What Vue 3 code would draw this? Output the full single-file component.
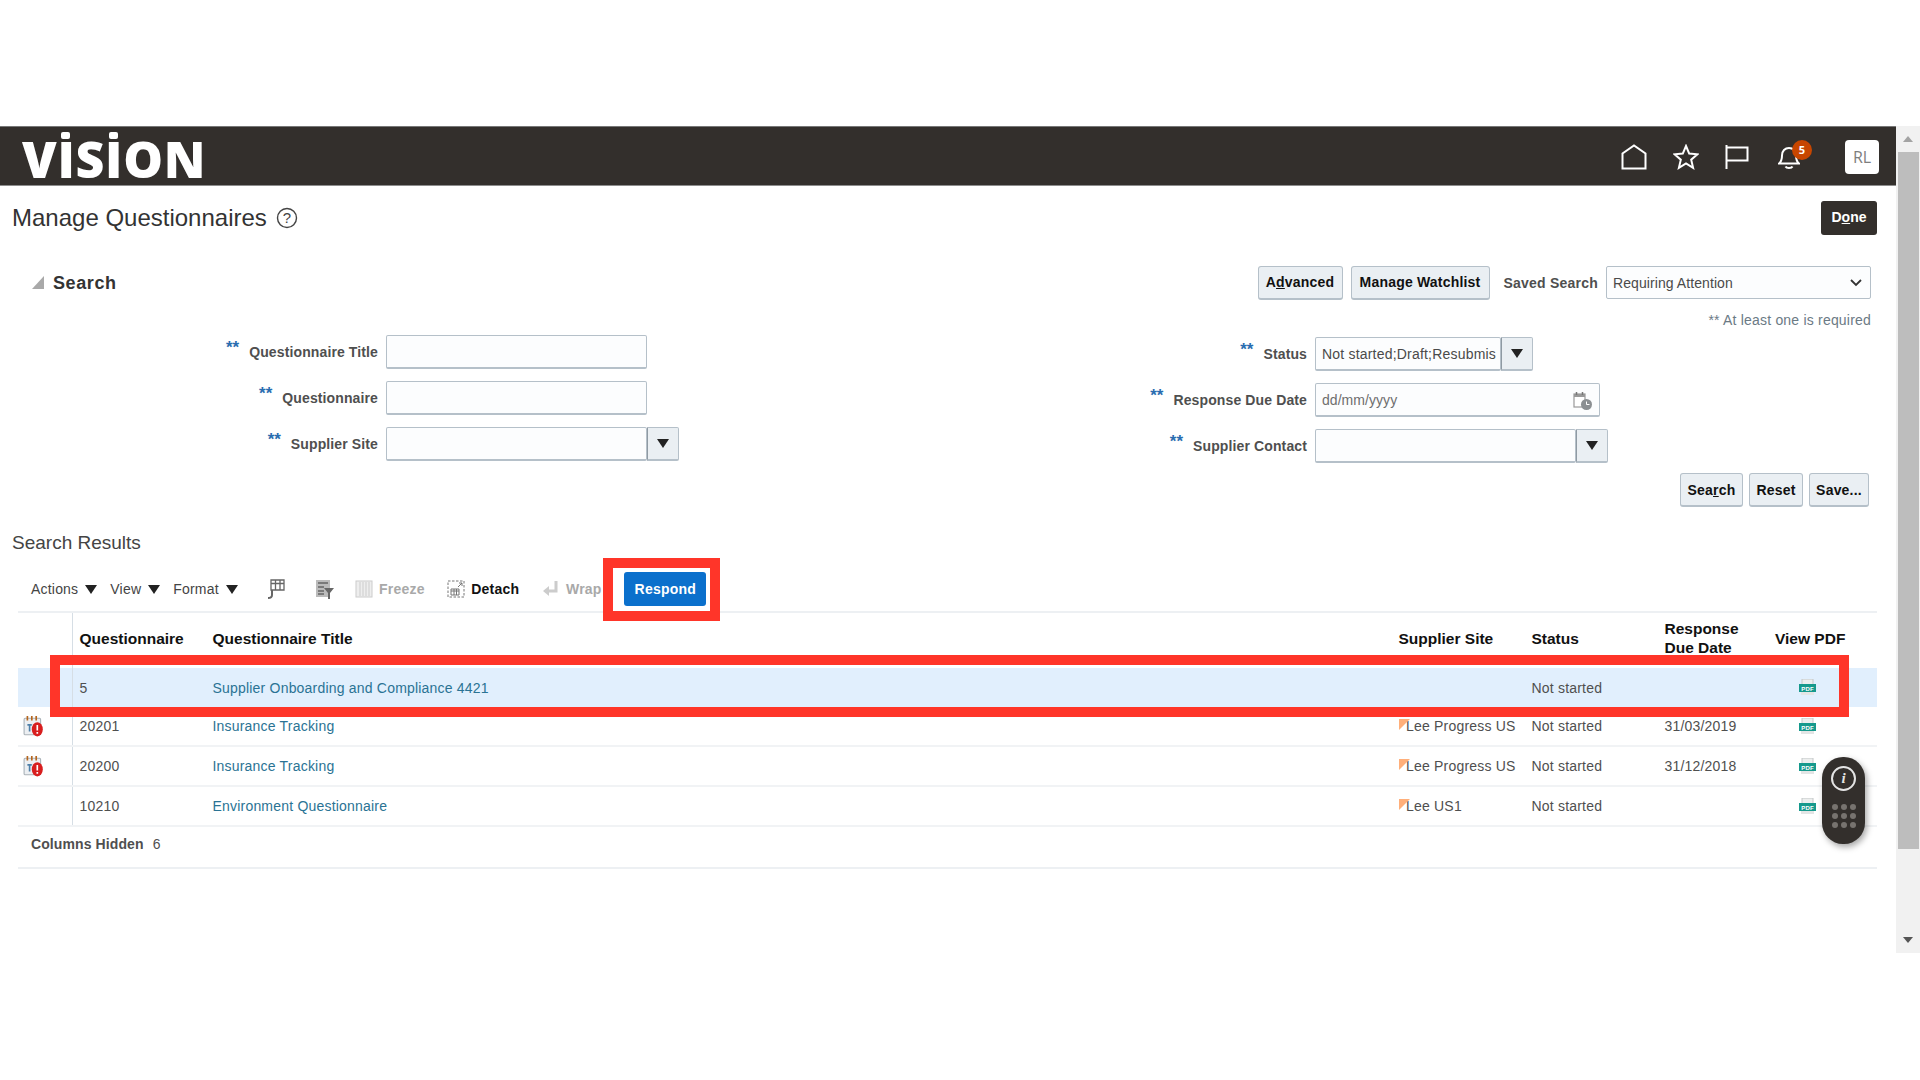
<script setup>
const leftFields = [
  { label: 'Questionnaire Title', dd: false },
  { label: 'Questionnaire', dd: false },
  { label: 'Supplier Site', dd: true }
]
const rows = [
  { id: '5', title: 'Supplier Onboarding and Compliance 4421', site: '', status: 'Not started', due: '', sel: true, alert: false },
  { id: '20201', title: 'Insurance Tracking', site: 'Lee Progress US', status: 'Not started', due: '31/03/2019', sel: false, alert: true },
  { id: '20200', title: 'Insurance Tracking', site: 'Lee Progress US', status: 'Not started', due: '31/12/2018', sel: false, alert: true },
  { id: '10210', title: 'Environment Questionnaire', site: 'Lee US1', status: 'Not started', due: '', sel: false, alert: false }
]
</script>

<template>
  <div class="frame">
    <div class="page">
      <main class="content">
        <header class="brand">
          <div class="logo">V<span class="dot">I</span>S<span class="dot">I</span>ON</div>
          <nav class="nav">
            <svg class="ni home" viewBox="0 0 26 26"><path d="M1.500 24.500V9.500L13 1.500l11.500 8v15z" fill="none" stroke="#fff" stroke-width="2"/></svg>
            <svg class="ni star" viewBox="0 0 26 26"><path d="M13 2l3.200 7.600 8.300.7-6.300 5.400 1.900 8.100L13 19.500l-7.100 4.300 1.900-8.100-6.300-5.400 8.300-.7z" fill="none" stroke="#fff" stroke-width="2" stroke-linejoin="miter"/></svg>
            <svg class="ni flag" viewBox="0 0 24 24"><path d="M1.500 0v24M1.500 2.500h21v13h-21" fill="none" stroke="#fff" stroke-width="2"/></svg>
            <div class="bellwrap">
              <svg class="ni bell" viewBox="0 0 22 24"><path d="M1 18.500c2.500-2 3-3.500 3-8 0-4.500 3-7.500 7-7.500s7 3 7 7.500c0 4.500.5 6 3 8zM7.500 21.500c1 2 6 2 7 0" fill="none" stroke="#fff" stroke-width="2"/></svg>
              <span class="badge">5</span>
            </div>
            <div class="avatar">RL</div>
          </nav>
        </header>

        <div class="titlerow">
          <h1 class="title">Manage Questionnaires</h1>
          <svg class="help" viewBox="0 0 22 22"><circle cx="11" cy="11" r="9.500" fill="none" stroke="#444" stroke-width="1.400"/><text x="11" y="16" text-anchor="middle" class="helpq">?</text></svg>
          <button class="btn dark">D<u>o</u>ne</button>
        </div>

        <div class="searchhead">
          <span class="tri"></span>
          <h2 class="searchtitle">Search</h2>
          <button class="btn adv">A<u>d</u>vanced</button>
          <button class="btn watch">Manage Watchlist</button>
          <span class="lab saved">Saved Search</span>
          <div class="select">
            <span>Requiring Attention</span>
            <svg width="12" height="8" viewBox="0 0 12 8"><path d="M1 1l5 5 5-5" fill="none" stroke="#333" stroke-width="1.800"/></svg>
          </div>
        </div>
        <div class="note">** At least one is required</div>

        <div class="forms">
          <div class="fgrid lgrid">
            <template v-for="f in leftFields" :key="f.label">
              <div class="lab"><span class="req">**</span>{{ f.label }}</div>
              <div class="field w-l">
                <div class="inp"></div>
                <div v-if="f.dd" class="dd"><i></i></div>
              </div>
            </template>
          </div>
          <div class="fgrid rgrid">
            <div class="lab"><span class="req">**</span>Status</div>
            <div class="field">
              <div class="inp w-s">Not started;Draft;Resubmis</div>
              <div class="dd"><i></i></div>
            </div>
            <div class="lab"><span class="req">**</span>Response Due Date</div>
            <div class="field">
              <div class="inp w-d ph">
                <span>dd/mm/yyyy</span>
                <svg width="20" height="20" viewBox="0 0 20 20">
                  <rect x="1" y="3" width="11" height="13" fill="#fff" stroke="#999" stroke-width="1.200"/>
                  <path d="M1 3h11v3H1z" fill="#999"/><path d="M3.500 1v3M9.500 1v3" stroke="#777" stroke-width="1.500"/>
                  <circle cx="13.500" cy="13.500" r="5.500" fill="#8b8f92"/><path d="M13.500 10.500v3h3" fill="none" stroke="#fff"/>
                </svg>
              </div>
            </div>
            <div class="lab"><span class="req">**</span>Supplier Contact</div>
            <div class="field">
              <div class="inp w-c"></div>
              <div class="dd"><i></i></div>
            </div>
          </div>
        </div>

        <div class="actions">
          <button class="btn b-search">Sea<u>r</u>ch</button>
          <button class="btn b-reset">Reset</button>
          <button class="btn b-save">Save...</button>
        </div>

        <h3 class="results">Search Results</h3>

        <div class="toolbar">
          <span class="menu m1">Actions<i></i></span>
          <span class="menu m2">View<i></i></span>
          <span class="menu m3">Format<i></i></span>
          <svg class="ti t1" viewBox="0 0 20 20"><path d="M6 1h13v10H6zM6 4.500h13M10.500 1v10M15 1v10" fill="none" stroke="#666" stroke-width="1.300"/><path d="M7 11v5c0 2-1 3-4 3" fill="none" stroke="#666" stroke-width="2"/></svg>
          <svg class="ti t2" viewBox="0 0 20 20"><path d="M1 1h14v17H1z" fill="#bbb"/><path d="M3 4h10M3 8h6M3 12h6M3 15h6" stroke="#666" stroke-width="1.500"/><path d="M9 9h10l-4 5v6h-2v-6z" fill="#666"/></svg>
          <svg class="ti t3" viewBox="0 0 18 18"><rect x="1" y="1" width="16" height="16" fill="#eee" stroke="#ccc"/><path d="M5 2v14M8 2v14M11 2v14M14 2v14" stroke="#ccc"/></svg>
          <span class="tbtn off tf">Freeze</span>
          <svg class="ti t4" viewBox="0 0 18 18"><path d="M1 1h16v16H1z" fill="none" stroke="#777" stroke-dasharray="2.500 1.500"/><path d="M4 9h8v6H4zM4 11h8M7 9v6M9.500 9v6" fill="none" stroke="#777"/><path d="M11 7l4-4M12 3h3v3" fill="none" stroke="#777"/></svg>
          <span class="tbtn on td">Detach</span>
          <svg class="ti t5" viewBox="0 0 18 18"><path d="M14 1v10H6" fill="none" stroke="#ccc" stroke-width="3"/><path d="M7 6v10L1 11z" fill="#ccc"/></svg>
          <span class="tbtn off tw">Wrap</span>
          <button class="respond">Respond</button>
        </div>

        <section class="table">
          <div class="row head">
            <div class="c c0"></div>
            <div class="c">Questionnaire</div>
            <div class="c">Questionnaire Title</div>
            <div class="c">Supplier Site</div>
            <div class="c">Status</div>
            <div class="c resp">Response Due Date</div>
            <div class="c vp">View PDF</div>
          </div>
          <div v-for="r in rows" :key="r.id" class="row body" :class="{ sel: r.sel }">
            <div class="c c0">
              <svg v-if="r.alert" class="cal" viewBox="0 0 20 20">
                <rect x="1" y="3" width="15" height="15" rx="1" fill="#eceff2" stroke="#aab2b8"/>
                <path d="M4 1v4M8 1v4M12 1v4" stroke="#b5651d" stroke-width="1.500"/>
                <path d="M4 9h4M6 9v6" stroke="#4d7fa8" stroke-width="1.500"/>
                <ellipse cx="13" cy="13" rx="5" ry="6.500" fill="#d81e1e"/>
                <path d="M13 9v5M13 15.500v1.500" stroke="#fff" stroke-width="1.500"/>
              </svg>
            </div>
            <div class="c">{{ r.id }}</div>
            <div class="c link">{{ r.title }}</div>
            <div class="c site"><span v-if="r.site" class="mark"></span>{{ r.site }}</div>
            <div class="c">{{ r.status }}</div>
            <div class="c">{{ r.due }}</div>
            <div class="c pdfc">
              <svg class="pdf" viewBox="0 0 17 17">
                <path d="M3 0h11v6H3z" fill="#eceeee" stroke="#c4c8c8"/>
                <rect x="0" y="5" width="17" height="8" fill="#16998c"/>
                <text x="8.500" y="11.600" text-anchor="middle" class="pdft">PDF</text>
                <path d="M2 13h13v3H2z" fill="#e3e5e5"/>
              </svg>
            </div>
          </div>
          <div class="foot"><span>Columns Hidden</span><b>6</b></div>
        </section>

        <div class="redbox rb1"></div>
        <div class="redbox rb2"></div>

        <div class="widget">
          <div class="info"><em>i</em></div>
          <div class="dots"><span v-for="n in 9" :key="n"></span></div>
        </div>
      </main>

      <aside class="scroll">
        <span class="up"></span>
        <div class="thumb"></div>
        <span class="down"></span>
      </aside>
    </div>
  </div>
</template>

<style>
html, body { margin: 0; background: #fff; }
</style>

<style scoped>
.frame {
  width: 1920px;
  height: 1080px;
  background: #fff;
  padding-top: 126px;
  box-sizing: border-box;
  font-family: "Liberation Sans", Arial, sans-serif;
  color: #4a4a4a;
  font-size: 14px;
  overflow: hidden;
}
.page { display: flex; height: 827px; }
.content { width: 1896px; position: relative; }

.brand {
  height: 60px;
  box-sizing: border-box;
  background: #332f2c;
  border-bottom: 1px solid #8d8d8d;
  border-top: 1px solid #777;
  display: flex;
  align-items: center;
  justify-content: space-between;
  padding: 0 17px 0 22px;
}
.logo {
  font-family: "Open Sans", sans-serif;
  font-weight: 800;
  font-size: 50px;
  line-height: 60px;
  color: #fff;
  letter-spacing: .7px;
  padding-top: 6px;
}
.dot { position: relative; display: inline-block; }
.dot::before {
  content: "";
  position: absolute;
  left: 50%;
  top: 3px;
  width: 9px;
  height: 7px;
  margin-left: -5px;
  background: #fff;
  border-radius: 2px;
}
.nav { display: flex; align-items: center; padding-top: 1px; }
.ni { display: block; }
.home { width: 26px; height: 26px; }
.star { width: 26px; height: 26px; margin-left: 26px; }
.flag { width: 24px; height: 24px; margin-left: 26px; }
.bellwrap { position: relative; margin-left: 29px; }
.bell { width: 22px; height: 24px; }
.badge {
  position: absolute;
  left: 14px;
  top: -5px;
  width: 20px;
  height: 20px;
  border-radius: 50%;
  background: #c74600;
  color: #fff;
  font: 700 11px/20px "Open Sans", sans-serif;
  text-align: center;
}
.avatar {
  margin-left: 45px;
  width: 34px;
  height: 34px;
  background: #fff;
  border-radius: 4px;
  color: #7e7e7e;
  font: 400 16px/34px "Open Sans", sans-serif;
  text-align: center;
}

.titlerow {
  display: flex;
  align-items: center;
  height: 33px;
  padding: 15px 19px 0 12px;
}
.title { margin: 0; font-weight: 400; font-size: 24px; color: #333; }
.help { width: 22px; height: 22px; margin-left: 9px; }
.helpq { font: 400 15px "Liberation Sans", sans-serif; fill: #444; }

.btn {
  font: 700 14px "Liberation Sans", sans-serif;
  color: #111;
  background: #eaeff3;
  border: 1px solid #b5c0c9;
  border-bottom-width: 2px;
  border-radius: 3px;
  padding: 0;
  height: 34px;
  box-sizing: border-box;
  letter-spacing: .2px;
}
.btn.dark {
  margin-left: auto;
  width: 56px;
  background: #332f2c;
  border-color: #332f2c;
  color: #fff;
  letter-spacing: 0;
}
.searchhead {
  display: flex;
  align-items: center;
  height: 33px;
  margin-top: 32px;
  padding: 0 25px 0 32px;
}
.tri {
  width: 0; height: 0;
  border-style: solid;
  border-width: 0 0 13px 12px;
  border-color: transparent transparent #a9a9a9 transparent;
}
.searchtitle { margin: 1px 0 0 9px; font-size: 18px; font-weight: 700; color: #333; letter-spacing: .6px; }
.adv { margin-left: auto; width: 85px; }
.watch { margin-left: 8px; width: 139px; }
.lab { font-weight: 700; color: #4f4f4f; font-size: 14px; letter-spacing: .12px; text-align: right; white-space: nowrap; margin-bottom: 1px; }
.saved { margin-left: 14px; margin-bottom: 0; letter-spacing: .22px; }
.select {
  margin-left: 8px;
  width: 265px;
  height: 33px;
  box-sizing: border-box;
  border: 1px solid #b5c0c9;
  border-radius: 2px;
  background: #fcfdfe;
  display: flex;
  align-items: center;
  justify-content: space-between;
  padding: 0 8px 0 6px;
  letter-spacing: .08px;
}
.note {
  margin-top: 13px;
  height: 16px;
  line-height: 16px;
  padding-right: 25px;
  text-align: right;
  color: #6b7a85;
  font-size: 14px;
  letter-spacing: .2px;
}
.forms {
  display: grid;
  grid-template-columns: 900px 1fr;
  margin-top: 7px;
}
.fgrid { display: grid; column-gap: 8px; row-gap: 12px; align-items: center; }
.lgrid { grid-template-columns: 378px auto; justify-content: start; grid-auto-rows: 34px; }
.rgrid { grid-template-columns: 407px auto; justify-content: start; grid-auto-rows: 34px; padding-top: 2px; }
.req { color: #2a6db0; font-size: 17px; font-weight: 700; margin-right: 10px; position: relative; top: -4px; letter-spacing: 0; }
.field { display: flex; height: 34px; }
.inp {
  box-sizing: border-box;
  height: 34px;
  width: 261px;
  background: #fcfdfe;
  border: 1px solid #b5c0c9;
  border-bottom-width: 2px;
  border-radius: 2px;
  padding: 0 6px;
  line-height: 33px;
  color: #4a4a4a;
  white-space: nowrap;
  overflow: hidden;
  letter-spacing: .2px;
}
.w-s { width: 186px; }
.w-d { width: 285px; display: flex; justify-content: space-between; align-items: center; color: #6e6e6e; letter-spacing: .05px; padding-top: 2px; }
.w-c { width: 261px; }
.dd {
  width: 32px;
  height: 34px;
  box-sizing: border-box;
  background: #eaeff3;
  border: 1px solid #b5c0c9;
  border-left-color: #8f9aa3;
  border-left-width: 1px;
  border-bottom-width: 2px;
  border-radius: 0 2px 2px 0;
  display: flex;
  align-items: center;
  justify-content: center;
}
.dd i, .menu i {
  display: block;
  width: 0; height: 0;
  border-style: solid;
  border-width: 9px 6px 0;
  border-color: #222 transparent transparent;
}
.actions {
  display: flex;
  justify-content: flex-end;
  gap: 6px;
  margin-top: 10px;
  padding-right: 27px;
}
.b-search { width: 63px; }
.b-reset { width: 54px; }
.b-save { width: 60px; }
.results {
  margin: 24px 0 0 12px;
  height: 24px;
  line-height: 24px;
  font-size: 19px;
  font-weight: 400;
  color: #444;
}
.toolbar {
  display: flex;
  align-items: center;
  height: 44px;
  margin: 12px 19px 0 18px;
  padding-left: 13px;
  box-sizing: border-box;
}
.menu { display: flex; align-items: center; color: #444; font-size: 14px; letter-spacing: .2px; }
.menu i { margin-left: 7px; }
.m2 { margin-left: 13px; }
.m3 { margin-left: 13px; }
.ti { width: 20px; height: 20px; flex: none; }
.t1 { margin-left: 27.300px; }
.t2 { margin-left: 30px; }
.t3 { margin-left: 20px; width: 18px; height: 18px; }
.t4 { margin-left: 22.200px; width: 18px; height: 18px; }
.t5 { margin-left: 22.300px; width: 18px; height: 18px; }
.tbtn { font-weight: 700; letter-spacing: .2px; }
.tf { margin-left: 6px; }
.td { margin-left: 6.500px; }
.tw { margin-left: 6.500px; }
.off { color: #a9a9a9; }
.on { color: #111; }
.respond {
  margin-left: 22.700px;
  width: 82px;
  height: 34px;
  background: #0b70cc;
  border: 0;
  border-radius: 3px;
  color: #fff;
  font: 700 14px "Liberation Sans", sans-serif;
  letter-spacing: .2px;
}
.table { margin: 0 19px 0 18px; border-top: 2px solid #edf0f3; }
.row {
  display: grid;
  grid-template-columns: 55px 133px 1186px 133px 133px 86px 133px;
  border-bottom: 2px solid #f1f3f5;
}
.c {
  padding-left: 6.500px;
  display: flex;
  align-items: center;
  white-space: nowrap;
  font-size: 14px;
  letter-spacing: .2px;
  color: #4f4f4f;
}
.c0 { border-right: 1px solid #d6dee5; padding-left: 0; box-sizing: border-box; }
.head { height: 55px; border-bottom: 0; }
.head .c { font-weight: 700; font-size: 15.500px; color: #111; letter-spacing: 0; padding-bottom: 4px; box-sizing: border-box; }
.head .c0 { padding-left: 0; padding-bottom: 0; }
.head .vp { padding-left: 31px; }
.head .resp { white-space: normal; line-height: 18.500px; width: 100px; padding-right: 0; padding-bottom: 4px; }
.body { height: 38px; }
.body .c { height: 38px; }
.sel { background: #e1effd; border-bottom: 0; height: 39px; }
.sel .c { height: 39px; }
.link { color: #2a7394; }
.site { position: relative; padding-left: 14px; }
.mark {
  position: absolute;
  left: 7px;
  top: 12px;
  width: 0; height: 0;
  border-style: solid;
  border-width: 11px 11px 0 0;
  border-color: #ffaf7a transparent transparent transparent;
}
.cal { width: 22px; height: 22px; margin-left: 5px; }
.pdfc { padding-left: 55px; }
.pdf { width: 17px; height: 17px; display: block; }
.pdft { font: 700 6px "Liberation Sans", sans-serif; fill: #fff; }
.foot {
  height: 42px;
  border-bottom: 2px solid #edf0f3;
  display: flex;
  align-items: center;
  padding: 0 0 6px 13px;
  box-sizing: border-box;
  font-weight: 700;
  color: #4f4f4f;
  letter-spacing: .1px;
}
.foot b { margin-left: 9px; font-weight: 400; }
.redbox { position: absolute; border: 10px solid #ff3529; box-sizing: border-box; pointer-events: none; }
.rb1 { left: 603px; top: 432px; width: 117px; height: 63px; }
.rb2 { left: 50px; top: 529px; width: 1799px; height: 62px; }
.widget {
  position: absolute;
  left: 1822px;
  top: 631px;
  width: 43px;
  height: 87px;
  background: #332f2c;
  border-radius: 21px;
  box-shadow: 2px 3px 6px rgba(0,0,0,.35);
}
.info {
  width: 25px;
  height: 25px;
  margin: 9px auto 0;
  border: 2px solid #e4e4e4;
  border-radius: 50%;
  box-sizing: border-box;
  color: #e4e4e4;
  text-align: center;
  font: italic 700 15px/21px "Liberation Serif", serif;
}
.info em { font-style: italic; }
.dots {
  display: grid;
  grid-template-columns: repeat(3, 6px);
  gap: 3px;
  justify-content: center;
  margin-top: 13px;
}
.dots span { width: 6px; height: 6px; border-radius: 50%; background: #77736f; }
.scroll {
  width: 24px;
  background: #f1f1f1;
  display: flex;
  flex-direction: column;
  align-items: center;
}
.up {
  margin-top: 10px;
  width: 0; height: 0;
  border-style: solid;
  border-width: 0 5.500px 6px;
  border-color: transparent transparent #a3a3a3;
}
.thumb { width: 21px; height: 697px; background: #bdbdbd; margin-top: 10px; }
.down {
  margin-top: 88px;
  width: 0; height: 0;
  border-style: solid;
  border-width: 6px 5.500px 0;
  border-color: #555 transparent transparent;
}
</style>
